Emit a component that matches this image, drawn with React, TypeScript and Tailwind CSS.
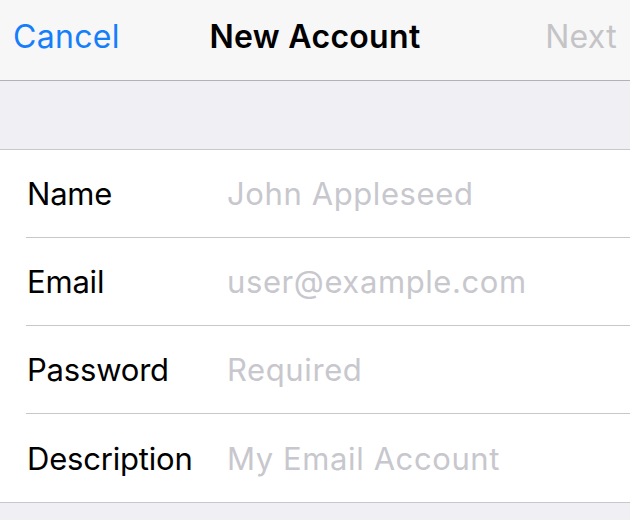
export default function App() {
  const rows = [
    { label: "Name", placeholder: "John Appleseed" },
    { label: "Email", placeholder: "user@example.com" },
    { label: "Password", placeholder: "Required" },
    { label: "Description", placeholder: "My Email Account" },
  ];

  return (
    <div className="w-[630px] h-[520px] overflow-hidden bg-[#efeff4] font-['Inter',sans-serif] antialiased">
      {/* Nav bar */}
      <div className="h-[81px] bg-[#f7f7f8] border-b border-[#b2b2b2] flex items-center px-[13px] pb-[7px] text-[32px] tracking-[0.3px]">
        <span className="flex-1 text-[#147efb]">Cancel</span>
        <span className="font-semibold text-black">New Account</span>
        <span className="flex-1 text-right text-[#c4c4c6]">Next</span>
      </div>

      <div className="h-[68px]" />

      {/* Form */}
      <div className="bg-white border-y border-[#c8c7cc]">
        {rows.map((row, i) => (
          <div key={row.label} className="pl-[26px]">
            <div
              className={
                "h-[88px] flex items-center pl-px pt-[2px] text-[31px] " +
                (i < rows.length - 1 ? "border-b border-[#c8c7cc]" : "")
              }
            >
              <span className="w-[200px] text-black tracking-[-0.2px]">{row.label}</span>
              <span className="text-[#c7c7cd] tracking-[0.6px]">{row.placeholder}</span>
            </div>
          </div>
        ))}
      </div>
    </div>
  );
}
